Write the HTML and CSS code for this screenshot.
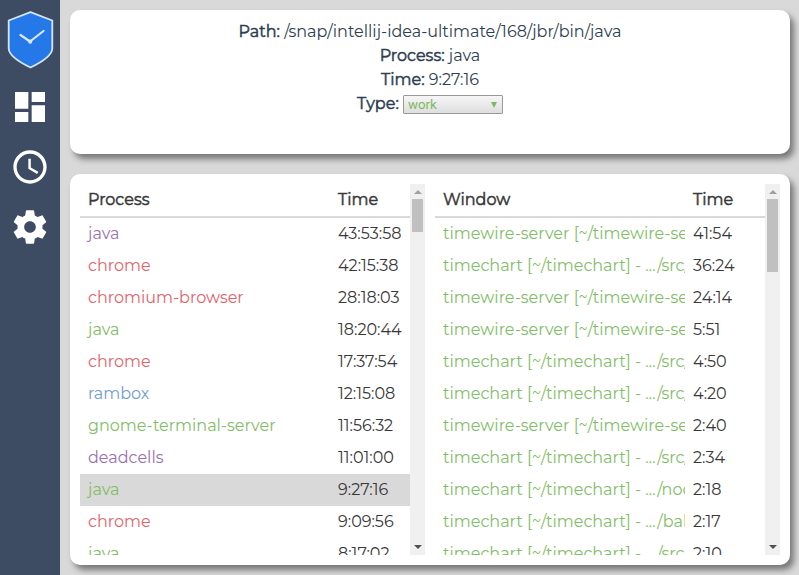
FILE: index.html
```html
<!DOCTYPE html>
<html lang="en">
<head>
<meta charset="utf-8">
<title>Timewire</title>
<link rel="stylesheet" href="styles.css">
</head>
<body>
<nav class="sidebar">
  <svg class="logo" width="48" height="60" viewBox="0 0 48 60"><path d="M24.5 2.2 46.3 10.5V38.5C46 45 36 52 24.5 57.5 13 52 3 45 2.7 38.5V10.5Z" fill="#2478e8" stroke="#d5e5fa" stroke-width="1.8" stroke-linejoin="round"/><path d="M14.5 25 24 31.5 37.5 21" fill="none" stroke="#d9e7fc" stroke-width="2.2" stroke-linecap="round" stroke-linejoin="round"/><circle cx="24.2" cy="31.7" r="2.1" fill="#d9e7fc"/></svg>
  <svg class="icon" viewBox="0 0 24 24"><path d="M3 13h8V3H3v10zm0 8h8v-6H3v6zm10 0h8V11h-8v10zm0-18v6h8V3h-8z"/></svg>
  <svg class="icon" viewBox="0 0 24 24"><path d="M11.99 2C6.47 2 2 6.48 2 12s4.47 10 9.99 10C17.52 22 22 17.52 22 12S17.52 2 11.99 2zM12 20c-4.42 0-8-3.58-8-8s3.58-8 8-8 8 3.58 8 8-3.58 8-8 8zm.5-13H11v6l5.25 3.15.75-1.23-4.5-2.67z"/></svg>
  <svg class="icon" viewBox="0 0 24 24"><path d="M19.43 12.98c.04-.32.07-.64.07-.98s-.03-.66-.07-.98l2.11-1.65c.19-.15.24-.42.12-.64l-2-3.46c-.12-.22-.39-.3-.61-.22l-2.49 1c-.52-.4-1.08-.73-1.69-.98l-.38-2.65C14.46 2.18 14.25 2 14 2h-4c-.25 0-.46.18-.49.42l-.38 2.65c-.61.25-1.17.59-1.69.98l-2.49-1c-.23-.09-.49 0-.61.22l-2 3.46c-.13.22-.07.49.12.64l2.11 1.65c-.04.32-.07.65-.07.98s.03.66.07.98l-2.11 1.65c-.19.15-.24.42-.12.64l2 3.46c.12.22.39.3.61.22l2.49-1c.52.4 1.08.73 1.69.98l.38 2.65c.03.24.24.42.49.42h4c.25 0 .46-.18.49-.42l.38-2.65c.61-.25 1.17-.59 1.69-.98l2.49 1c.23.09.49 0 .61-.22l2-3.46c.12-.22.07-.49-.12-.64l-2.11-1.65zM12 15.5c-1.93 0-3.5-1.57-3.5-3.5s1.57-3.5 3.5-3.5 3.5 1.57 3.5 3.5-1.57 3.5-3.5 3.5z"/></svg>
</nav>
<main class="content">
  <section class="card details">
    <div class="line"><b>Path:</b> /snap/intellij-idea-ultimate/168/jbr/bin/java</div>
    <div class="line"><b>Process:</b> java</div>
    <div class="line"><b>Time:</b> 9:27:16</div>
    <div class="line"><b>Type:</b> <span class="select"><span>work</span><svg width="6" height="6" viewBox="0 0 6 6"><path d="M0 0h6L3 6z"/></svg></span></div>
  </section>
  <section class="card lists">
    <div class="pane">
      <div class="table">
        <div class="row head"><span>Process</span><span>Time</span></div>
        <div class="row"><span class="name purple">java</span><span>43:53:58</span></div>
        <div class="row"><span class="name red">chrome</span><span>42:15:38</span></div>
        <div class="row"><span class="name red">chromium-browser</span><span>28:18:03</span></div>
        <div class="row"><span class="name green">java</span><span>18:20:44</span></div>
        <div class="row"><span class="name red">chrome</span><span>17:37:54</span></div>
        <div class="row"><span class="name blue">rambox</span><span>12:15:08</span></div>
        <div class="row"><span class="name green">gnome-terminal-server</span><span>11:56:32</span></div>
        <div class="row"><span class="name purple">deadcells</span><span>11:01:00</span></div>
        <div class="row selected"><span class="name green">java</span><span>9:27:16</span></div>
        <div class="row"><span class="name red">chrome</span><span>9:09:56</span></div>
        <div class="row"><span class="name green">java</span><span>8:17:02</span></div>
      </div>
      <div class="scrollbar"><i class="up"></i><i class="thumb"></i><i class="down"></i></div>
    </div>
    <div class="pane windows">
      <div class="table">
        <div class="row head"><span>Window</span><span>Time</span></div>
        <div class="row"><span class="name green"><span>timewire-server [~/timewire-server]</span></span><span>41:54</span></div>
        <div class="row"><span class="name green"><span>timechart [~/timechart] - …/src/</span></span><span>36:24</span></div>
        <div class="row"><span class="name green"><span>timewire-server [~/timewire-server]</span></span><span>24:14</span></div>
        <div class="row"><span class="name green"><span>timewire-server [~/timewire-server]</span></span><span>5:51</span></div>
        <div class="row"><span class="name green"><span>timechart [~/timechart] - …/src/</span></span><span>4:50</span></div>
        <div class="row"><span class="name green"><span>timechart [~/timechart] - …/src/</span></span><span>4:20</span></div>
        <div class="row"><span class="name green"><span>timewire-server [~/timewire-server]</span></span><span>2:40</span></div>
        <div class="row"><span class="name green"><span>timechart [~/timechart] - …/src/</span></span><span>2:34</span></div>
        <div class="row"><span class="name green"><span>timechart [~/timechart] - …/node</span></span><span>2:18</span></div>
        <div class="row"><span class="name green"><span>timechart [~/timechart] - …/bak</span></span><span>2:17</span></div>
        <div class="row"><span class="name green"><span>timechart [~/timechart] - …/src/</span></span><span>2:10</span></div>
      </div>
      <div class="scrollbar"><i class="up"></i><i class="thumb"></i><i class="down"></i></div>
    </div>
  </section>
</main>
</body>
</html>
```
FILE: styles.css
```css
* { box-sizing: border-box; }
body {
  margin: 0;
  height: 575px;
  display: flex;
  overflow: hidden;
  background: #d9d9d9;
  color: #383838;
  font: 400 16px/24px Montserrat, Inter, sans-serif;
}
.sidebar {
  width: 60px;
  flex: none;
  display: flex;
  flex-direction: column;
  align-items: center;
  background: #3d4c63;
}
.logo { margin: 10px 0 17px; flex: none; }
.icon { width: 40px; height: 40px; margin-bottom: 20px; fill: #fff; flex: none; }
.content {
  flex: 1;
  display: flex;
  flex-direction: column;
  gap: 20px;
  padding: 10px 9px 10px 10px;
}
.card {
  background: #fff;
  border-radius: 10px;
  box-shadow: 4px 5px 6px #777;
}
.details { height: 144px; padding-top: 10px; color: #2c3e50; text-align: center; }
.line { height: 24px; white-space: nowrap; }
.line b, .head { font-weight: 400; -webkit-text-stroke: .5px currentColor; }
.select {
  display: inline-flex;
  vertical-align: top;
  justify-content: space-between;
  align-items: center;
  width: 100px;
  height: 19px;
  margin-top: 3px;
  padding: 0 5px 0 4px;
  border: 1px solid #999;
  border-radius: 1px;
  background: linear-gradient(#f6f6f6, #dedede);
  color: #7dba62;
  font: 400 13.33px/17px Roboto, sans-serif;
}
.select svg { fill: #7dba62; }
.lists { height: 391px; display: flex; gap: 10px; padding: 10px; }
.pane { width: 345px; height: 371px; display: flex; overflow: hidden; }
.table { width: 330px; flex: none; }
.row { display: grid; grid-template-columns: 250px 80px; height: 32px; align-items: center; }
.row > span { padding-left: 8px; white-space: nowrap; line-height: 32px; }
.head { height: 34px; border-bottom: 2px solid #d9d9d9; }
.selected { background: #d9d9d9; }
.name > span { display: block; overflow: hidden; width: 242px; }
.purple { color: #9a70b0; }
.red { color: #dd6468; }
.green { color: #82bd68; }
.blue { color: #729cd3; }
.scrollbar { width: 15px; display: flex; flex-direction: column; align-items: center; background: #f0f0f0; }
.up { margin: 6px 0 5px; border: solid transparent; border-width: 0 4px 4px; border-bottom-color: #a0a0a0; }
.thumb { width: 11px; height: 33px; background: #c0c0c0; }
.windows .thumb { height: 73px; }
.down { margin: auto 0 6px; border: solid transparent; border-width: 4px 4px 0; border-top-color: #505050; }
```
